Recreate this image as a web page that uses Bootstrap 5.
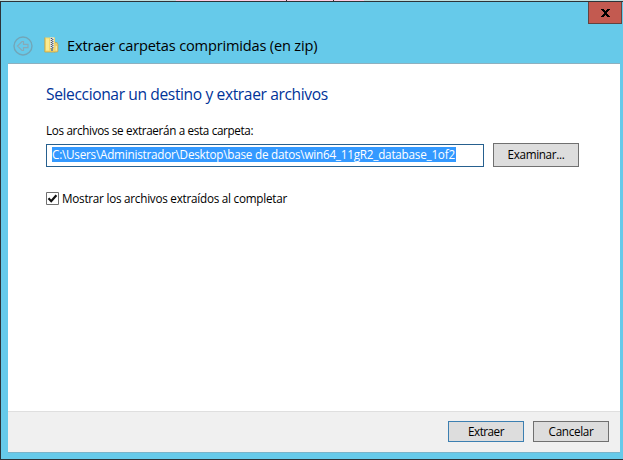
<!DOCTYPE html>
<html lang="es">
<head>
<meta charset="utf-8">
<title>Extraer carpetas comprimidas (en zip)</title>
<link href="https://cdn.jsdelivr.net/npm/bootstrap@5.3.0/dist/css/bootstrap.min.css" rel="stylesheet">
<style>
body{width:623px;height:460px;overflow:hidden;font:11.7px/16px "Open Sans","Noto Sans",sans-serif;color:#000;background:#66caea}
.backdrop{height:1px;background:linear-gradient(90deg,#c0dedd 176px,#ffcde3 176px 286px,#333 286px 287px,#ffcde3 287px 333px,#333 333px 334px,#ffcde3 334px 364px,#c0dedd 364px)}
.window{height:459px;border:1px solid #2c3338;border-right:0;background:#66caea;padding:0 3px 6px 7px}
.titlebar{height:61px;padding-left:5px}
.back-icon{margin-top:34px}
.zip-icon{margin:35px 0 0 11px}
.caption{font-size:14.6px;line-height:20px;letter-spacing:-.18px;margin:33px 0 0 7px}
.close-btn{width:34px;height:22px;margin-left:auto;margin-right:-2px;background:#c35a50;border:1px solid #63423f;border-top:0}
.close-x{margin-top:7px}
.sheet{background:#fff;border-top:1px solid #8db0bf;height:390px}
.content-area{padding:19px 38px 0}
.heading{font-size:15.6px;line-height:22px;color:#039;letter-spacing:-.385px;margin:0}
.path-label{letter-spacing:-.34px;margin-top:17px}
.path-row{margin-top:5px}
.path-box{width:438px;height:23px;border:1px solid #26608f;padding:2px 5px}
.selected-path{display:block;width:404px;height:15px;line-height:15px;background:#39f;color:#fff;letter-spacing:-.22px;white-space:nowrap}
.btn-win{height:24px;border:1px solid #707070;border-radius:0;background:#ddd;color:#000;font-size:11.7px;line-height:16px;padding:2px 0 4px;letter-spacing:-.33px}
.btn-win:hover{background:#ddd;color:#000;border-color:#707070}
.btn-browse{width:86px;margin-left:9px}
.btn-foot{width:76px;height:21px;padding:1px 0 2px}
.btn-default{border-color:#3c7fb1;letter-spacing:-.5px}
.check-row{margin-top:23px;letter-spacing:-.24px;gap:3px}
.footer-bar{height:42px;background:#f0f0f0;border-top:1px solid #dfdfdf;border-bottom:1px solid #79b4ca;padding:9px 11px 0 0;gap:9px}
</style>
<script src="https://cdn.jsdelivr.net/npm/bootstrap@5.3.0/dist/js/bootstrap.bundle.min.js"></script>
</head>
<body>
<div class="backdrop"></div>
<div class="window">
  <header class="titlebar d-flex align-items-start">
    <svg class="back-icon flex-shrink-0" width="20" height="20" viewBox="0 0 20 20" fill="none"><circle cx="10" cy="10" r="9" stroke="#72a6b8" stroke-width="1.400"/><path d="M4.500 10 9 5.500h1.500v2.800H15v3.400h-4.500v2.800H9Z" stroke="#86aab8" stroke-width="1.200"/></svg>
    <svg class="zip-icon flex-shrink-0" width="16" height="16" viewBox="0 0 16 16"><path d="M10 5.500h3l1 2v7l-1 .5h-3Z" fill="#efcd6c" stroke="#b99b4e" stroke-width=".6"/><path d="M11.500 9h1.500v4.500h-1.500Z" fill="#f9e9a5"/><path d="M1 .5h10V15H1Z" fill="#f4d86c"/><path d="M2 1.500h3v12H2Z" fill="#fbeb90"/><path d="M.8 .5V15H11" fill="none" stroke="#cfa53b" stroke-width=".8"/><path d="M6 .5h4V11H6Z" fill="#e9e9e2"/><path d="M7.500 1v11" stroke="#4b5468" stroke-width="1.500" stroke-dasharray="1 1"/><path d="M8.800 2v10" stroke="#4b5468" stroke-width="1.200" stroke-dasharray="1 1"/><path d="M7 11h2v3H7Z" fill="#818a92"/></svg>
    <div class="caption text-nowrap">Extraer carpetas comprimidas (en zip)</div>
    <button class="close-btn p-0 d-flex justify-content-center" type="button" aria-label="Cerrar"><svg class="close-x" width="9" height="8" viewBox="0 0 9 8" shape-rendering="crispEdges"><path d="M0 0h3v1h1v1h1V1h1V0h3v1H8v1H7v1H6v2h1v1h1v1h1v1H6V7H5V6H4v1H3v1H0V7h1V6h1V5h1V3H2V2H1V1H0Z"/></svg></button>
  </header>
  <main class="sheet d-flex flex-column">
    <section class="content-area flex-grow-1">
      <h1 class="heading fw-normal">Seleccionar un destino y extraer archivos</h1>
      <div class="path-label">Los archivos se extraerán a esta carpeta:</div>
      <div class="path-row d-flex align-items-end">
        <div class="path-box"><span class="selected-path">C:\Users\Administrador\Desktop\base de datos\win64_11gR2_database_1of2</span></div>
        <button class="btn btn-win btn-browse" type="button">Examinar...</button>
      </div>
      <label class="check-row d-flex align-items-center">
        <svg width="13" height="13" viewBox="0 0 13 13"><path d="M.5.5h12v12H.5Z" fill="#fff" stroke="#707070"/><path d="m2.500 6.300 2.700 2.900 5.200-6" fill="none" stroke="#111" stroke-width="2.200"/></svg>
        <span>Mostrar los archivos extraídos al completar</span>
      </label>
    </section>
    <footer class="footer-bar d-flex justify-content-end align-items-start">
      <button class="btn btn-win btn-foot btn-default" type="button">Extraer</button>
      <button class="btn btn-win btn-foot" type="button">Cancelar</button>
    </footer>
  </main>
</div>
</body>
</html>
